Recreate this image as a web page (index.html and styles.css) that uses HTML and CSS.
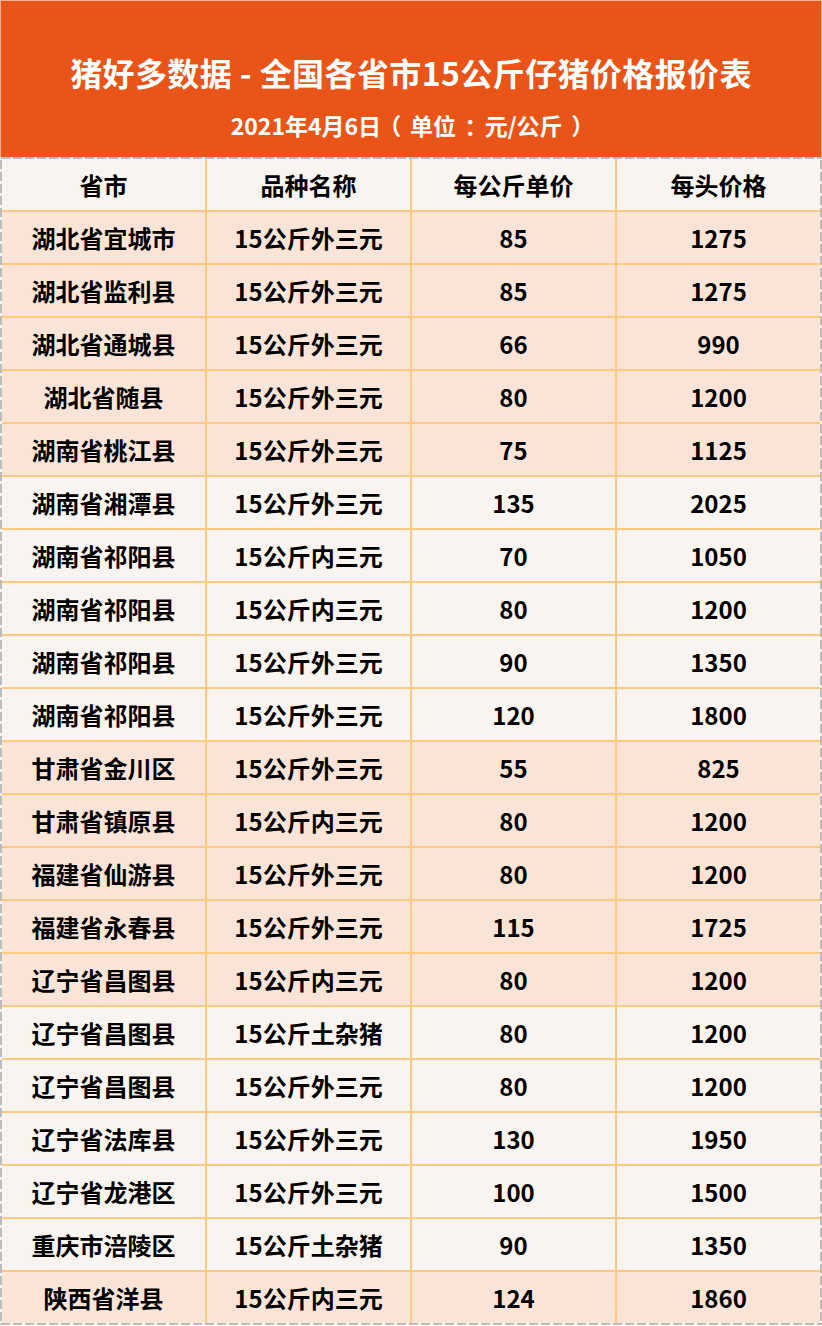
FILE: index.html
```html
<!DOCTYPE html>
<html lang="zh-CN">
<head>
<meta charset="utf-8">
<title>猪好多数据 - 全国各省市15公斤仔猪价格报价表</title>
<link rel="stylesheet" href="styles.css">
</head>
<body>
<div class="page">
  <header class="banner">
    <h1 class="title">猪好多数据 - 全国各省市15公斤仔猪价格报价表</h1>
    <p class="subtitle">2021年4月6日<span class="punct">（</span>单位<span class="punct">：</span>元/公斤<span class="punct">）</span></p>
  </header>
  <div class="frame">
    <div class="grid">
      <div class="row light head"><div>省市</div><div>品种名称</div><div>每公斤单价</div><div>每头价格</div></div>
      <div class="row peach"><div>湖北省宜城市</div><div>15公斤外三元</div><div>85</div><div>1275</div></div>
      <div class="row peach"><div>湖北省监利县</div><div>15公斤外三元</div><div>85</div><div>1275</div></div>
      <div class="row peach"><div>湖北省通城县</div><div>15公斤外三元</div><div>66</div><div>990</div></div>
      <div class="row peach"><div>湖北省随县</div><div>15公斤外三元</div><div>80</div><div>1200</div></div>
      <div class="row peach"><div>湖南省桃江县</div><div>15公斤外三元</div><div>75</div><div>1125</div></div>
      <div class="row light"><div>湖南省湘潭县</div><div>15公斤外三元</div><div>135</div><div>2025</div></div>
      <div class="row light"><div>湖南省祁阳县</div><div>15公斤内三元</div><div>70</div><div>1050</div></div>
      <div class="row light"><div>湖南省祁阳县</div><div>15公斤内三元</div><div>80</div><div>1200</div></div>
      <div class="row light"><div>湖南省祁阳县</div><div>15公斤外三元</div><div>90</div><div>1350</div></div>
      <div class="row light"><div>湖南省祁阳县</div><div>15公斤外三元</div><div>120</div><div>1800</div></div>
      <div class="row peach"><div>甘肃省金川区</div><div>15公斤外三元</div><div>55</div><div>825</div></div>
      <div class="row peach"><div>甘肃省镇原县</div><div>15公斤内三元</div><div>80</div><div>1200</div></div>
      <div class="row peach"><div>福建省仙游县</div><div>15公斤外三元</div><div>80</div><div>1200</div></div>
      <div class="row peach"><div>福建省永春县</div><div>15公斤外三元</div><div>115</div><div>1725</div></div>
      <div class="row peach"><div>辽宁省昌图县</div><div>15公斤内三元</div><div>80</div><div>1200</div></div>
      <div class="row light"><div>辽宁省昌图县</div><div>15公斤土杂猪</div><div>80</div><div>1200</div></div>
      <div class="row light"><div>辽宁省昌图县</div><div>15公斤外三元</div><div>80</div><div>1200</div></div>
      <div class="row light"><div>辽宁省法库县</div><div>15公斤外三元</div><div>130</div><div>1950</div></div>
      <div class="row light"><div>辽宁省龙港区</div><div>15公斤外三元</div><div>100</div><div>1500</div></div>
      <div class="row light"><div>重庆市涪陵区</div><div>15公斤土杂猪</div><div>90</div><div>1350</div></div>
      <div class="row peach"><div>陕西省洋县</div><div>15公斤内三元</div><div>124</div><div>1860</div></div>
    </div>
  </div>
</div>
</body>
</html>
```

FILE: styles.css
```css
html, body {
  margin: 0;
  padding: 0;
  background: #ffffff;
}
body {
  font-family: "Noto Sans CJK SC", "Microsoft YaHei", sans-serif;
  width: 822px;
}
.page {
  width: 822px;
  display: flex;
  flex-direction: column;
}
.banner {
  height: 157px;
  box-sizing: border-box;
  background: #e95518;
  border: 1px solid #f2b393;
  border-bottom: none;
  color: #ffffff;
  display: flex;
  flex-direction: column;
  align-items: center;
  padding-top: 49px;
}
.title {
  margin: 0;
  font-size: 32px;
  font-weight: 700;
  line-height: 44px;
  letter-spacing: 0.4px;
}
.subtitle {
  margin: 16px 0 0;
  font-size: 23px;
  font-weight: 700;
  line-height: 30px;
  white-space: nowrap;
}
.punct {
  display: inline-block;
  width: 1.25em;
  text-align: center;
  font-feature-settings: "halt";
}
.frame {
  padding: 2px;
  background-color: #f9f4ef;
  background-image:
    repeating-linear-gradient(90deg, #bcbcbc 0 9px, transparent 9px 12px),
    repeating-linear-gradient(90deg, #bcbcbc 0 9px, transparent 9px 12px),
    repeating-linear-gradient(180deg, #bcbcbc 0 9px, transparent 9px 12px),
    repeating-linear-gradient(180deg, #bcbcbc 0 9px, transparent 9px 12px);
  background-size: 100% 2px, 100% 2px, 2px 100%, 2px 100%;
  background-position: 1px 0, 1px 100%, 0 3px, 100% 3px;
  background-repeat: no-repeat;
}
.grid {
  display: flex;
  flex-direction: column;
  gap: 2px;
  background: #fdca80;
}
.row {
  display: grid;
  grid-template-columns: repeat(4, 1fr);
  gap: 2px;
}
.row > div {
  height: 51px;
  display: flex;
  align-items: center;
  justify-content: center;
  font-size: 24px;
  font-weight: 700;
  color: #000000;
}
.row.light > div {
  background: #f9f4ef;
}
.row.peach > div {
  background: #fae4d8;
}
```
